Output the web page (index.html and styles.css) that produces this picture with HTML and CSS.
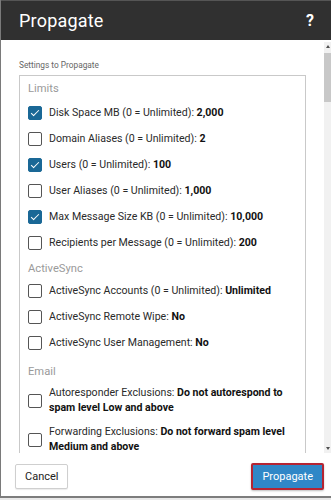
FILE: index.html
```html
<!DOCTYPE html>
<html lang="en">
<head>
    <meta charset="UTF-8">
    <meta name="viewport" content="width=device-width, initial-scale=1.0">
    <title>Propagate</title>
    <link rel="stylesheet" href="styles.css">
</head>
<body>
    <div class="modal">
        <div class="modal-header">
            <h1>Propagate</h1>
            <span class="help">?</span>
        </div>

        <div class="modal-body">
            <div class="content">
                <p class="caption">Settings to Propagate</p>

                <div class="settings-box">
                    <div class="group-title first">Limits</div>

                    <label class="check-row">
                        <span class="box checked"></span>
                        <span>Disk Space MB (0 = Unlimited): <b>2,000</b></span>
                    </label>
                    <label class="check-row">
                        <span class="box"></span>
                        <span>Domain Aliases (0 = Unlimited): <b>2</b></span>
                    </label>
                    <label class="check-row">
                        <span class="box checked"></span>
                        <span>Users (0 = Unlimited): <b>100</b></span>
                    </label>
                    <label class="check-row">
                        <span class="box"></span>
                        <span>User Aliases (0 = Unlimited): <b>1,000</b></span>
                    </label>
                    <label class="check-row">
                        <span class="box checked"></span>
                        <span>Max Message Size KB (0 = Unlimited): <b>10,000</b></span>
                    </label>
                    <label class="check-row">
                        <span class="box"></span>
                        <span>Recipients per Message (0 = Unlimited): <b>200</b></span>
                    </label>

                    <div class="group-title">ActiveSync</div>

                    <label class="check-row">
                        <span class="box"></span>
                        <span>ActiveSync Accounts (0 = Unlimited): <b>Unlimited</b></span>
                    </label>
                    <label class="check-row">
                        <span class="box"></span>
                        <span>ActiveSync Remote Wipe: <b>No</b></span>
                    </label>
                    <label class="check-row">
                        <span class="box"></span>
                        <span>ActiveSync User Management: <b>No</b></span>
                    </label>

                    <div class="group-title email">Email</div>

                    <label class="check-row multi">
                        <span class="box"></span>
                        <span>Autoresponder Exclusions: <b>Do not autorespond to spam level Low and above</b></span>
                    </label>
                    <label class="check-row multi">
                        <span class="box"></span>
                        <span>Forwarding Exclusions: <b>Do not forward spam level Medium and above</b></span>
                    </label>
                </div>
            </div>

            <div class="scrollbar">
                <span class="arrow up"></span>
                <div class="track">
                    <div class="thumb"></div>
                </div>
                <span class="arrow down"></span>
            </div>
        </div>

        <div class="modal-footer">
            <button class="btn">Cancel</button>
            <button class="btn primary">Propagate</button>
        </div>
    </div>
</body>
</html>
```

FILE: styles.css
```css
* {
    margin: 0;
    padding: 0;
    box-sizing: border-box;
}

body {
    font-family: Roboto, 'Liberation Sans', sans-serif;
    background-color: #e9e9e9;
    color: #222;
    width: 331px;
    overflow: hidden;
}

.modal {
    width: 331px;
    height: 498px;
    background: #fff;
    border-left: 1px solid #7a7a7a;
    border-bottom: 2px solid #7d7d7d;
    display: flex;
    flex-direction: column;
}

.modal-header {
    height: 40px;
    flex-shrink: 0;
    background: #303030;
    border-top: 1px solid #555;
    display: flex;
    align-items: center;
    justify-content: space-between;
    padding: 0 17px 0 18px;
    color: #fff;
}

.modal-header h1 {
    font-size: 18px;
    font-weight: 400;
    letter-spacing: 0.2px;
}

.help {
    font-size: 16px;
    font-weight: 700;
}

.modal-body {
    height: 413px;
    flex-shrink: 0;
    display: flex;
    overflow: hidden;
}

.content {
    flex: 1;
    padding: 19px 18px 0 18px;
    overflow: hidden;
}

.caption {
    font-size: 8.3px;
    color: #666;
    line-height: 12px;
    margin-bottom: 4px;
}

.settings-box {
    border: 1px solid #c9c9c9;
    padding: 4px 4px 0 8px;
}

.group-title {
    font-size: 11.2px;
    color: #9a9a9a;
    line-height: 18px;
    margin-top: 4px;
}

.group-title.first {
    margin-top: 0;
    margin-bottom: 2px;
}

.group-title.email {
    margin-top: 7px;
}

.check-row {
    display: flex;
    align-items: center;
    gap: 7px;
    min-height: 26px;
    font-size: 10.6px;
    line-height: 14.5px;
    color: #2a2a2a;
}

.check-row b {
    font-weight: 700;
    color: #111;
}

.check-row.multi {
    padding: 5px 0 5px;
}

.box {
    width: 14px;
    height: 14px;
    flex-shrink: 0;
    border: 1.5px solid #555;
    border-radius: 2px;
    background: #fff;
    position: relative;
}

.box.checked {
    background: #1a6896;
    border-color: #1a6896;
}

.box.checked::after {
    content: '';
    position: absolute;
    left: 4px;
    top: 1px;
    width: 3px;
    height: 7px;
    border: solid #fff;
    border-width: 0 1.5px 1.5px 0;
    transform: rotate(45deg);
}

.scrollbar {
    width: 7px;
    flex-shrink: 0;
    display: flex;
    flex-direction: column;
    background: #f1f1f1;
    margin-top: 2px;
}

.arrow {
    height: 9px;
    display: flex;
    align-items: center;
    justify-content: center;
}

.arrow::before {
    content: '';
    width: 0;
    height: 0;
    border-left: 2.5px solid transparent;
    border-right: 2.5px solid transparent;
}

.arrow.up::before {
    border-bottom: 3px solid #505050;
}

.arrow.down::before {
    border-top: 3px solid #505050;
}

.track {
    flex: 1;
}

.thumb {
    height: 49px;
    background: #c8c8c8;
    margin-top: 2px;
}

.modal-footer {
    flex: 1;
    display: flex;
    align-items: center;
    justify-content: space-between;
    padding: 4px 7px 0 14px;
}

.btn {
    font-family: Roboto, 'Liberation Sans', sans-serif;
    font-size: 11px;
    height: 25px;
    padding: 0 9px;
    background: #fff;
    color: #222;
    border: 1px solid #cfcfcf;
    border-radius: 2px;
    box-shadow: 0 1px 1px rgba(0, 0, 0, 0.08);
}

.btn.primary {
    height: 27px;
    padding: 0 9px;
    background: #2f87c7;
    color: #fff;
    border: 2px solid #b52432;
    box-shadow: 0 1px 2px rgba(0, 0, 0, 0.25);
}
```
